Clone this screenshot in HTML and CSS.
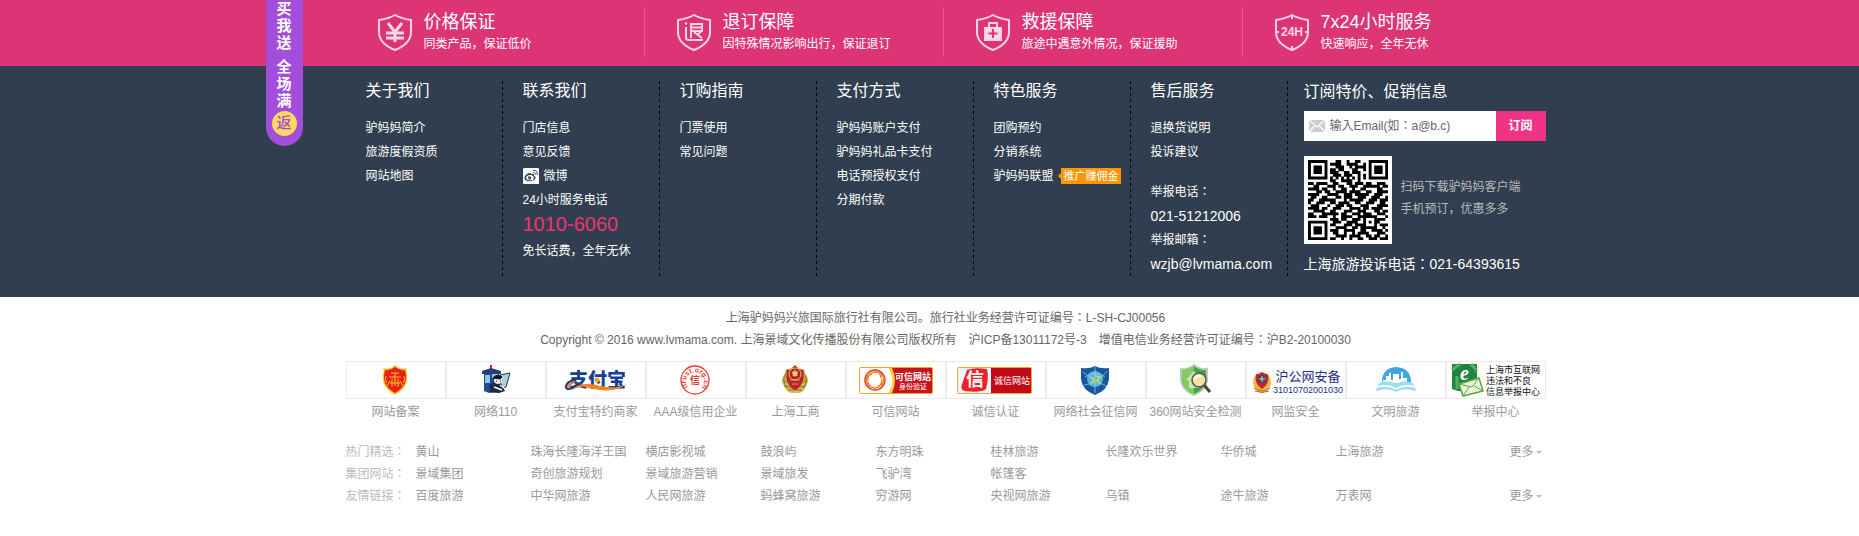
FILE: index.html
```html
<!DOCTYPE html>
<html lang="zh-CN">
<head>
<meta charset="utf-8">
<title>驴妈妈旅游网</title>
<link rel="stylesheet" href="styles.css">
</head>
<body>
<section class="band promise">
  <div class="wrap promise-list">
    <div class="promise-item">
      <svg class="shield" viewBox="0 0 36 38"><path class="ln" d="M18 2C13 5 8 6 2 7v12c0 8 6 14 16 18 10-4 16-10 16-18V7C28 6 23 5 18 2z"/><path class="ln bold" d="M11 10l7 9 7-9M18 19v10M9 20h18M9 25h18"/></svg>
      <div><h3>价格保证</h3><p>同类产品，保证低价</p></div>
    </div>
    <div class="promise-item">
      <svg class="shield" viewBox="0 0 36 38"><path class="ln" d="M18 2C13 5 8 6 2 7v12c0 8 6 14 16 18 10-4 16-10 16-18V7C28 6 23 5 18 2z"/><path class="ln" d="M9 10l2 1M10 14v11q0 2 3 2h14M15 25V11h11v7H15M15 14.500h10M18 19l8 6M25 19l-3 2"/></svg>
      <div><h3>退订保障</h3><p>因特殊情况影响出行，保证退订</p></div>
    </div>
    <div class="promise-item">
      <svg class="shield" viewBox="0 0 36 38"><path class="ln" d="M18 2C13 5 8 6 2 7v12c0 8 6 14 16 18 10-4 16-10 16-18V7C28 6 23 5 18 2z"/><path class="ln" d="M14 14v-4h8v4"/><path class="fill" d="M9 14h18v14H9z"/><path class="cross" d="M18 16v9M13.500 20.500h9"/></svg>
      <div><h3>救援保障</h3><p>旅途中遇意外情况，保证援助</p></div>
    </div>
    <div class="promise-item">
      <svg class="shield" viewBox="0 0 36 38"><path class="ln" d="M18 2C13 5 8 6 2 7v12c0 8 6 14 16 18 10-4 16-10 16-18V7C28 6 23 5 18 2zM18 2v4M18 33v4M2 19h3M31 19h3"/><text class="h24" x="18" y="23">24H</text></svg>
      <div><h3>7x24小时服务</h3><p>快速响应，全年无休</p></div>
    </div>
    <aside class="ribbon"><span>买</span><span>我</span><span class="gap">送</span><span>全</span><span>场</span><span>满</span><b>返</b></aside>
  </div>
</section>

<section class="band guide">
  <div class="wrap guide-grid">
    <div class="col"><h4>关于我们</h4><ul>
      <li><a href="#">驴妈妈简介</a></li><li><a href="#">旅游度假资质</a></li><li><a href="#">网站地图</a></li></ul></div>
    <div class="col"><h4>联系我们</h4><ul>
      <li><a href="#">门店信息</a></li><li><a href="#">意见反馈</a></li>
      <li><a class="weibo" href="#"><svg viewBox="0 0 16 16"><rect width="16" height="16" rx="1" fill="#fff"/><path d="M6 5C3 6 1 8.500 1.500 10.500 2 13 5 13.600 8 13c3-.5 5-2.500 4.500-4-.3-1-1.500-1-1.500-1s.5-1.500-.5-2S8 6.500 8 6.500 8.500 4.500 6 5z" fill="#303e4f"/><ellipse cx="7" cy="9.700" rx="3.800" ry="2.600" fill="#fff"/><circle cx="6.500" cy="10" r="1.800" fill="#303e4f"/><circle cx="6" cy="10.300" r=".6" fill="#fff"/><path d="M10 2.500c3-.6 5 1.500 4 4.500M10.500 4.600c1.500-.2 2.200.8 1.800 2" fill="none" stroke="#303e4f"/></svg>微博</a></li>
      <li>24小时服务电话</li><li class="hotline">1010-6060</li><li>免长话费，全年无休</li></ul></div>
    <div class="col"><h4>订购指南</h4><ul>
      <li><a href="#">门票使用</a></li><li><a href="#">常见问题</a></li></ul></div>
    <div class="col"><h4>支付方式</h4><ul>
      <li><a href="#">驴妈妈账户支付</a></li><li><a href="#">驴妈妈礼品卡支付</a></li><li><a href="#">电话预授权支付</a></li><li><a href="#">分期付款</a></li></ul></div>
    <div class="col"><h4>特色服务</h4><ul>
      <li><a href="#">团购预约</a></li><li><a href="#">分销系统</a></li><li class="union"><a href="#">驴妈妈联盟</a><span class="tag">推广赚佣金</span></li></ul></div>
    <div class="col"><h4>售后服务</h4><ul>
      <li><a href="#">退换货说明</a></li><li><a href="#">投诉建议</a></li></ul>
      <ul class="report"><li>举报电话<i lang="zh-TW">：</i></li><li class="big">021-51212006</li><li>举报邮箱<i lang="zh-TW">：</i></li><li class="big">wzjb@lvmama.com</li></ul></div>
    <div class="subscribe">
      <h4><label for="email">订阅特价、促销信息</label></h4>
      <form class="mail">
        <div class="field"><svg viewBox="0 0 16 12"><path d="M0 0h16v12H0z" fill="#ccc"/><path d="M0 0l8 7 8-7M0 12l5.500-6M16 12l-5.500-6" fill="none" stroke="#fff" stroke-width="1.200"/></svg><input id="email" type="text" lang="zh-TW" placeholder="输入Email(如：a@b.c)"></div>
        <button type="button">订阅</button>
      </form>
      <div class="app">
        <svg class="qr" id="qr" viewBox="0 0 29 29"></svg>
        <p>扫码下载驴妈妈客户端<br>手机预订，优惠多多</p>
      </div>
      <p class="complain">上海旅游投诉电话<i lang="zh-TW">：</i>021-64393615</p>
    </div>
  </div>
</section>

<footer class="band">
  <div class="wrap">
    <div class="legal">
      <p>上海驴妈妈兴旅国际旅行社有限公司。旅行社业务经营许可证编号<i lang="zh-TW">：</i>L-SH-CJ00056</p>
      <p>Copyright © 2016 www.lvmama.com. 上海景域文化传播股份有限公司版权所有　沪ICP备13011172号-3　增值电信业务经营许可证编号<i lang="zh-TW">：</i>沪B2-20100030</p>
    </div>
    <div class="certs">
      <a href="#"><svg viewBox="0 0 98 36"><path d="M48 3l4 3q4 1 8 0l-1 3q2 4 1 9c-1 7-6 11-12 15-6-4-11-8-12-15q-1-5 1-9l-1-3q4 1 8 0z" fill="#fbc51b"/><path d="M48 5q5 4 10 3 2 8 0 13-3 6-10 10-7-4-10-10-2-5 0-13 5 1 10-3z" fill="#e8201c"/><path d="M44 11h8M48 11v13M42 15h12M43 19l-3 5M53 19l3 5M43 21h10M45 17v8M51 17v8M39 14q-2 4 1 7M57 14q2 4-1 7" fill="none" stroke="#fbc51b"/></svg><span>网站备案</span></a>
      <a href="#"><svg viewBox="0 0 98 36"><path d="M43 3h2v5h-2z" fill="#e22"/><path d="M35 9l9-3 10 3v3H35z" fill="#213f78"/><path d="M37 12h15v18l-10 1-5-2z" fill="#234a8c"/><path d="M38 13h5v8h-5zM45 12h6v4h-6z" fill="#8ec4ea"/><path d="M53 13l10-2-4 14-7 2z" fill="#aad4de" stroke="#234"/><path d="M42 24q5-6 12-3l4 8-6 2-9-1z" fill="#192c49"/><ellipse cx="51" cy="18" rx="4" ry="4" fill="#f4e8df"/><path d="M46 16q4-5 9-1l-2 2zM49 19h1M53 19h1" stroke="#112" fill="#112"/><path d="M47 25l8 3M53 23l4 3" stroke="#fff" stroke-width="1.500"/></svg><span>网络110</span></a>
      <a href="#"><svg viewBox="0 0 98 36"><text x="22" y="25" class="ali">支付宝</text><path d="M29 19c-8-1-12 7-7 8 5 0 8-5 17-5 12-1 24 8 41 0-14 10-30 6-42 3-7-2-13 5-18 2" fill="#f58220"/><path d="M29 18c-9 0-13 8-8 9 4 1 7-4 12-6" fill="none" stroke="#173f94" stroke-width="2"/><circle cx="50" cy="18" r="2.500" fill="#f7a01d"/></svg><span>支付宝特约商家</span></a>
      <a href="#"><svg viewBox="0 0 98 36"><defs><path id="ring" d="M41 25a9 9 0 1 1 14 0"/></defs><circle cx="48" cy="18" r="14" fill="#fff" stroke="#e63a35" stroke-width="1.300"/><text class="itrust"><textPath href="#ring">itrust.org.cn</textPath></text><text class="xin" x="48" y="22">信</text></svg><span>AAA级信用企业</span></a>
      <a href="#"><svg viewBox="0 0 98 36"><path d="M39 10q-7 8-2 14 3 8 11 7 9 1 11-7 5-6-2-14" fill="#d2b95c"/><path d="M39 11q-5 8 1 15M57 11q5 8-1 15M41 28h14M36 18l5 3M60 18l-5 3M37 24l6 1M59 24l-6 1" fill="none" stroke="#877426"/><path d="M48 3l4 4 5 1v9q-2 8-9 12-7-4-9-12V8l5-1z" fill="#ba2527" stroke="#c9a043"/><circle cx="48" cy="12" r="6" fill="#b31f25" stroke="#e4c66d"/><path d="M48 8l1 2h2l-1 2v2h-4v-2l-1-2h2zM43 18h10M45 22h6" fill="#efd36c" stroke="#e4c66d" stroke-width=".7"/></svg><span>上海工商</span></a>
      <a href="#"><svg viewBox="0 0 98 36"><rect x="12.500" y="5.500" width="73" height="26" rx="1" fill="#fff" stroke="#efa52b"/><path d="M42 6h43v25H42q8-12 0-25z" fill="#c7141e"/><path d="M42 6h3q6 12 0 25h-3q7-12 0-25z" fill="#ffd12b"/><g fill="none" stroke-width="1.500"><circle cx="28" cy="18" r="10" stroke="#e43a20"/><path d="M21 19q-1-8 7-9 6 0 6 6M28 10q9 1 9 8 0 5-6 6M35 17q0 8-7 9-6 0-7-6M28 26q-8-1-9-8 1-5 6-6" stroke="#f08226"/></g><text x="66" y="18" class="white9">可信网站</text><text x="66" y="27" class="white7">身份验证</text></svg><span>可信网站</span></a>
      <a href="#"><svg viewBox="0 0 98 36"><rect x="10.500" y="5.500" width="74" height="26" rx="1" fill="#eff5fa" stroke="#efa52b"/><path d="M44 6h40v25H44z" fill="#c20b17"/><path d="M20 8q7-3 20-1 2 9-1 20-5 4-21 2-5-1-3-7z" fill="#ed2229"/><text x="28" y="24" class="cred">信</text><text x="65" y="22" class="white9 light">诚信网站</text></svg><span>诚信认证</span></a>
      <a href="#"><svg viewBox="0 0 98 36"><path d="M48 4q5 3 14 2v11q-1 11-14 16-13-5-14-16V6q9 1 14-2z" fill="#17589d"/><circle cx="48" cy="17" r="8" fill="#55b3df"/><path d="M36 10q10 9 23 14M60 9Q51 22 37 23M48 5v26M38 15q10-7 20 0" fill="none" stroke="#9bd4ef" stroke-width=".7"/><path d="M44 15l3 2-3 5M48 14l5 1-3 3 3 4" stroke="#c6dc45" fill="none" stroke-width="1.500"/></svg><span>网络社会征信网</span></a>
      <a href="#"><svg viewBox="0 0 98 36"><path d="M47 3q6 5 13 4v11q-1 10-13 15-12-5-13-15V7q7 1 13-4z" fill="#42a548" stroke="#b7c9b8" stroke-width="2"/><path d="M47 4v28Q36 27 35 18V8q7 0 12-4z" fill="#80cc63"/><path d="M39 18l8-9 8 9h-3v8H42v-8z" fill="#c9e8b0"/><path d="M57 23l6 7" stroke="#444" stroke-width="3"/><circle cx="52" cy="18" r="7" fill="#f5dfa5" stroke="#555" stroke-width="1.500"/><path d="M48 17q2-4 6-3" stroke="#fff" fill="none" stroke-width="2"/></svg><span>360网站安全检测</span></a>
      <a href="#"><svg viewBox="0 0 98 36"><ellipse cx="15" cy="20" rx="9" ry="10" fill="#edb640"/><path d="M7 26q8 6 16 0M8 29q7 3 14 0" stroke="#a66a18" fill="none"/><path d="M15 10q3 3 6 2 2 10-6 15-8-5-6-15 3 1 6-2z" fill="#c3262c"/><circle cx="15" cy="17" r="4" fill="#294b8d"/><path d="M15 14v6M12 17h6" stroke="#f8dc68"/><text x="61" y="19" class="police">沪公网安备</text><text x="61" y="31" class="policeno">31010702001030</text></svg><span>网监安全</span></a>
      <a href="#"><svg viewBox="0 0 98 36"><path d="M35 20q0-14 14-15 15 1 15 15v3H35z" fill="#43a5df"/><path d="M36 21v-3h3v-4h3v-3h2v7h2v-6h6v5h2v-7h2v6h4v6z" fill="#fff"/><path d="M32 21q10-4 17 1 8-5 17-1l3 8q-12-4-20 1-8-5-20-1z" fill="#9ddced"/><path d="M31 25q10-3 18 2 9-5 18-2" stroke="#fff" stroke-width="1.500" fill="none"/></svg><span>文明旅游</span></a>
      <a href="#"><svg viewBox="0 0 98 36"><path d="M5 2h25v25q-13 5-25 0z" fill="#238345"/><path d="M5 8l8-6M10 27V14M24 2l6 7" stroke="#55b05e" stroke-width="3"/><text x="13" y="18" class="e">e</text><path d="M12 22l20-6 4 13-20 5z" fill="#e9f5de" stroke="#5ba742" stroke-width="1.500"/><path d="M12 22l13 3 7-9M16 34l6-9M36 29l-9-5" fill="none" stroke="#5ba742"/><text x="39" y="11" class="rep">上海市互联网</text><text x="39" y="22" class="rep">违法和不良</text><text x="39" y="33" class="rep">信息举报中心</text></svg><span>举报中心</span></a>
    </div>
    <div class="links">
      <div class="row"><span>热门精选<i lang="zh-TW">：</i></span><a href="#">黄山</a><a href="#">珠海长隆海洋王国</a><a href="#">横店影视城</a><a href="#">鼓浪屿</a><a href="#">东方明珠</a><a href="#">桂林旅游</a><a href="#">长隆欢乐世界</a><a href="#">华侨城</a><a href="#">上海旅游</a><a class="more" href="#">更多</a></div>
      <div class="row"><span>集团网站<i lang="zh-TW">：</i></span><a href="#">景域集团</a><a href="#">奇创旅游规划</a><a href="#">景域旅游营销</a><a href="#">景域旅发</a><a href="#">飞驴湾</a><a href="#">帐篷客</a></div>
      <div class="row"><span>友情链接<i lang="zh-TW">：</i></span><a href="#">百度旅游</a><a href="#">中华网旅游</a><a href="#">人民网旅游</a><a href="#">蚂蜂窝旅游</a><a href="#">穷游网</a><a href="#">央视网旅游</a><a href="#">乌镇</a><a href="#">途牛旅游</a><a href="#">万表网</a><a class="more" href="#">更多</a></div>
    </div>
  </div>
</footer>
<script src="qr.js"></script>
</body>
</html>
```
FILE: styles.css
```css
* { box-sizing: border-box; margin: 0; padding: 0; }
body { font: 12px/24px Arial, "Liberation Sans", "Noto Sans CJK SC", sans-serif; color: #666; background: #fff; }
ul { list-style: none; }
a { color: inherit; text-decoration: none; }
h3, h4 { font-weight: normal; }
/* centred full-width colon */
i { font-style: normal; font-family: "Noto Sans CJK TC", sans-serif; line-height: 1; }
.band { padding-left: 32px; }
.wrap { max-width: 1200px; margin: 0 auto; }

.promise { background: #dd3475; color: #fff; }
.promise-list { position: relative; display: grid; grid-template-columns: repeat(4, 299px); padding: 7px 0 9px; }
.promise-item { display: flex; gap: 11px; height: 50px; padding: 3px 0 0 31px; border-right: 1px solid #e65c91; }
.promise-item:nth-child(4) { border-right: 0; }
.promise-item h3 { font-size: 18px; line-height: 24px; }
.promise-item p { line-height: 20px; }
.shield { width: 36px; height: 38px; margin-top: 3px; fill: none; }
.ln { stroke: #fbd5e3; stroke-width: 2; }
.bold { stroke-width: 3; }
.fill { fill: #fbd5e3; }
.cross { stroke: #dd3475; stroke-width: 2; }
.h24 { fill: #fbd5e3; font-size: 12px; font-weight: bold; text-anchor: middle; }
.ribbon { position: absolute; left: -80px; top: 0; width: 37px; height: 146px; display: flex; flex-direction: column; align-items: center; background: #a34ddb; border-radius: 0 0 19px 19px; font-size: 15px; line-height: 17px; font-weight: bold; }
.ribbon .gap { margin-bottom: 7px; }
.ribbon b { width: 25px; height: 25px; margin-top: 2px; border-radius: 50%; background: #ffd85e; color: #a34ddb; line-height: 24px; text-align: center; font-weight: 500; }

.guide { background: #303e4f; color: #fff; }
.guide-grid { display: grid; grid-template-columns: repeat(6, 157px) 1fr; padding: 15px 0 21px; }
.guide h4 { font-size: 16px; line-height: 20px; margin-bottom: 15px; }
.col { min-height: 195px; padding-left: 20px; background: repeating-linear-gradient(#000 0 3px, transparent 3px 6px) right / 1px 100% no-repeat; white-space: nowrap; }
.weibo { display: flex; align-items: center; gap: 5px; }
.weibo svg { width: 16px; height: 16px; }
.hotline { padding-bottom: 2px; font-size: 20px; line-height: 25px; color: #f03370; }
.union { display: flex; align-items: center; }
.tag { position: relative; margin-left: 7px; padding: 0 2px 0 3px; background: #ff9500; font-size: 11px; line-height: 16px; }
.tag::before { content: ""; position: absolute; left: -3px; top: 5px; border: 3px solid transparent; border-right-color: #ff9500; border-left: 0; }
.report { padding-top: 16px; }
.big { font-size: 14px; }
.subscribe { padding-left: 16px; }
.subscribe h4 { line-height: 22px; margin-bottom: 8px; }
.mail { display: flex; height: 30px; }
.field { flex: 1; display: flex; align-items: center; gap: 5px; padding-left: 5px; background: #fff; }
.field svg { width: 16px; height: 12px; }
.field input { flex: 1; min-width: 0; height: 28px; border: 0; outline: 0; background: none; font: 12px Arial, "Liberation Sans", "Noto Sans CJK TC", sans-serif; color: #666; }
.field input::placeholder { color: #666; }
.mail button { width: 50px; border: 0; background: #f03385; color: #fff; font: inherit; font-weight: bold; }
.app { display: flex; gap: 9px; margin-top: 15px; line-height: 22px; color: #bbb; }
.app p { padding-top: 20px; }
.qr { width: 88px; height: 88px; padding: 4px; background: #fff; }
.complain { margin-top: 8px; font-size: 14px; line-height: 24px; }

.legal { padding-top: 10px; line-height: 22px; text-align: center; }
.certs { display: grid; grid-template-columns: repeat(12, 1fr); margin-top: 10px; color: #999; text-align: center; white-space: nowrap; }
.certs svg { display: block; width: 100%; height: 38px; border: 1px solid #ebebeb; }
.certs span { display: block; padding-top: 1px; }
.ali { font-size: 19px; font-weight: 900; fill: #173f94; }
.itrust { font-size: 7px; font-weight: bold; fill: #e63a35; }
.xin { font-size: 10px; font-weight: bold; fill: #e63a35; text-anchor: middle; }
.white9 { font-size: 9px; font-weight: bold; fill: #fff; text-anchor: middle; }
.white7 { font-size: 7px; fill: #fff; text-anchor: middle; }
.light { font-weight: normal; }
.cred { font-size: 18px; font-weight: bold; fill: #fff; text-anchor: middle; }
.police { font-size: 13px; fill: #1c2f86; text-anchor: middle; }
.policeno { font-size: 9px; fill: #1c2f86; text-anchor: middle; }
.e { font: italic bold 20px "Liberation Serif", serif; fill: #fff; }
.rep { font-size: 9px; fill: #111; }

.links { padding-top: 17px; line-height: 22px; color: #999; }
.row { display: grid; grid-template-columns: 70px repeat(9, 115px) 1fr; white-space: nowrap; }
.row span { color: #bbb; }
.more { justify-self: end; display: flex; align-items: center; gap: 2px; margin-right: 4px; }
.more::after { content: ""; border: 3px solid transparent; border-top-color: #bbb; border-bottom: 0; }
```
FILE: qr.js
```javascript
const rows = [
  "11111110001100100110001111111",
  "10000010111100111100101000001",
  "10111010001110010111101011101",
  "10111010110110001100101011101",
  "10111010111001101110001011101",
  "10000010011101110010101000001",
  "11111110101010101010101111111",
  "00000000110011110010000000000",
  "11011110011000110111011001110",
  "00110001110110011100111111011",
  "11110110010011001001100001100",
  "00011011001111011110011001111",
  "11110001111001110111110011100",
  "01100110001101110011100111001",
  "11001111110001011111001110111",
  "10011100110111100110011100110",
  "01110001001110110001110001111",
  "11110110011100011110110111100",
  "00111100110001110011100011011",
  "11000111111011001110111001110",
  "11101110010011110011111110001",
  "00000000111011001110100011110",
  "11111110011100111100101011000",
  "10000010110001110111100010111",
  "10111010001111001101111110010",
  "10111010111001111001100111101",
  "10111010011001001011110001110",
  "10000010001111011110011011001",
  "11111110110010010011001110111"
];
const d = rows.map((r, y) => [...r].map((c, x) => c === "1" ? `M${x} ${y}h1.05v1.05h-1.05z` : "").join("")).join("");
document.getElementById("qr").innerHTML = `<path d="${d}"/>`;
```
